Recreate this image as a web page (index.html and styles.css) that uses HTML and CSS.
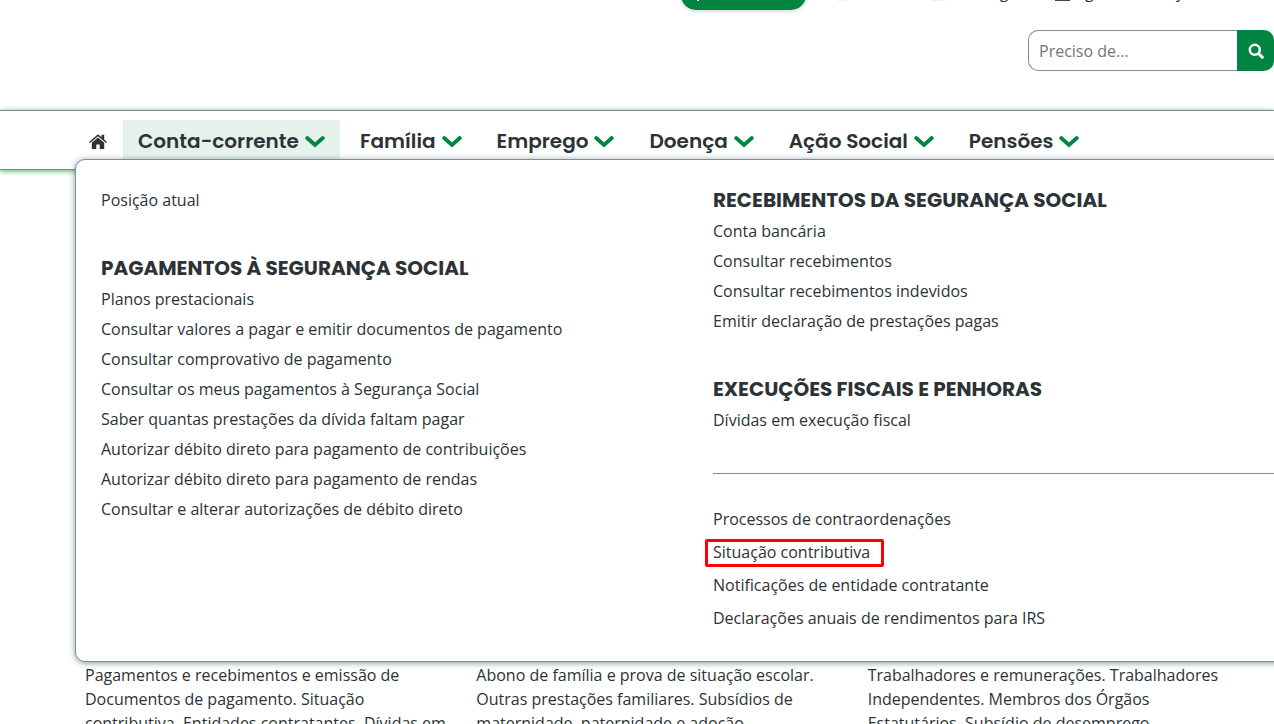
FILE: index.html
```html
<!DOCTYPE html>
<html lang="pt">
<head>
    <meta charset="UTF-8">
    <meta name="viewport" content="width=device-width, initial-scale=1.0">
    <title>Segurança Social Direta</title>
    <link rel="stylesheet" href="styles.css">
</head>
<body>
    <svg class="sprite" aria-hidden="true">
        <symbol id="chevron" viewBox="0 0 20 14">
            <path d="M2.2 4 L10 11 L17.8 4" fill="none" stroke="currentColor" stroke-width="3.8" stroke-linecap="round"/>
        </symbol>
    </svg>

    <header>
        <div class="topbar">
            <button class="btn-entity" type="button" aria-label="Entidade">
                <svg width="2" height="12" viewBox="0 0 2 12"><rect width="2" height="12" fill="currentColor"/></svg>
            </button>
            <a href="#" class="top-link profile"><i class="dot small"></i>Perfil</a>
            <a href="#" class="top-link messages"><i class="dot"></i>Mensagens</a>
            <a href="#" class="top-link agenda"><i class="dot dark"></i>Agenda</a>
            <a href="#" class="top-link help">Ajuda</a>
        </div>
        <form class="search">
            <input type="text" placeholder="Preciso de..." aria-label="Preciso de...">
            <button type="submit" aria-label="Pesquisar">
                <svg width="16" height="16" viewBox="0 0 16 16"><circle cx="6.8" cy="6.8" r="5" fill="none" stroke="currentColor" stroke-width="2.5"/><path d="M10.5 10.5 L14.3 14.3" stroke="currentColor" stroke-width="3" stroke-linecap="round"/></svg>
            </button>
        </form>
    </header>

    <nav class="menu">
        <a href="#" class="home" aria-label="Início">
            <svg width="18" height="15" viewBox="0 0 18 15" fill="currentColor"><path d="M9 0.2 L12.6 3.3 V0.8 H15.2 V5.5 L18 7.9 L17 9 L9 2.3 L1 9 L0 7.9 Z"/><path d="M9 3.6 L15.2 8.8 V15 H10.7 V10.5 H7.3 V15 H2.8 V8.8 Z"/></svg>
        </a>
        <a href="#" class="active">Conta-corrente <svg class="chevron"><use href="#chevron"/></svg></a>
        <a href="#">Família <svg class="chevron"><use href="#chevron"/></svg></a>
        <a href="#">Emprego <svg class="chevron"><use href="#chevron"/></svg></a>
        <a href="#">Doença <svg class="chevron"><use href="#chevron"/></svg></a>
        <a href="#">Ação Social <svg class="chevron"><use href="#chevron"/></svg></a>
        <a href="#">Pensões <svg class="chevron"><use href="#chevron"/></svg></a>

        <!-- submenu Conta-corrente -->
        <div class="submenu">
            <div class="col">
                <ul>
                    <li><a href="#">Posição atual</a></li>
                </ul>
                <h2>Pagamentos à Segurança Social</h2>
                <ul>
                    <li><a href="#">Planos prestacionais</a></li>
                    <li><a href="#">Consultar valores a pagar e emitir documentos de pagamento</a></li>
                    <li><a href="#">Consultar comprovativo de pagamento</a></li>
                    <li><a href="#">Consultar os meus pagamentos à Segurança Social</a></li>
                    <li><a href="#">Saber quantas prestações da dívida faltam pagar</a></li>
                    <li><a href="#">Autorizar débito direto para pagamento de contribuições</a></li>
                    <li><a href="#">Autorizar débito direto para pagamento de rendas</a></li>
                    <li><a href="#">Consultar e alterar autorizações de débito direto</a></li>
                </ul>
            </div>
            <div class="col">
                <h2>Recebimentos da Segurança Social</h2>
                <ul>
                    <li><a href="#">Conta bancária</a></li>
                    <li><a href="#">Consultar recebimentos</a></li>
                    <li><a href="#">Consultar recebimentos indevidos</a></li>
                    <li><a href="#">Emitir declaração de prestações pagas</a></li>
                </ul>
                <h2>Execuções fiscais e penhoras</h2>
                <ul>
                    <li><a href="#">Dívidas em execução fiscal</a></li>
                </ul>
                <hr>
                <ul class="others">
                    <li><a href="#">Processos de contraordenações</a></li>
                    <li><a href="#" class="marked">Situação contributiva</a></li>
                    <li><a href="#">Notificações de entidade contratante</a></li>
                    <li><a href="#">Declarações anuais de rendimentos para IRS</a></li>
                </ul>
            </div>
        </div>
    </nav>

    <main>
        <p>Pagamentos e recebimentos e emissão de Documentos de pagamento. Situação contributiva. Entidades contratantes. Dívidas em</p>
        <p>Abono de família e prova de situação escolar. Outras prestações familiares. Subsídios de maternidade, paternidade e adoção.</p>
        <p>Trabalhadores e remunerações. Trabalhadores Independentes. Membros dos Órgãos Estatutários. Subsídio de desemprego.</p>
    </main>
</body>
</html>
```
FILE: styles.css
```css
* {
    box-sizing: border-box;
}

body {
    margin: 0;
    height: 100vh;
    overflow: hidden;
    background-color: #fff;
    color: #2c3236;
    font-family: "Open Sans", sans-serif;
    font-size: 16px;
    line-height: 24px;
}

a {
    color: inherit;
    text-decoration: none;
}

ul {
    list-style: none;
    margin: 0;
    padding: 0;
}

.sprite {
    display: none;
}

/* header */
header {
    display: flow-root;
    height: 110px;
}

.topbar {
    display: flex;
    justify-content: flex-end;
    height: 30px;
    margin-top: -20px;
}

.btn-entity {
    display: flex;
    align-items: center;
    width: 125px;
    margin-right: 32px;
    padding: 0 16px;
    border: none;
    border-radius: 15px;
    background-color: #008542;
    color: #fff;
    box-shadow: 0 1px 4px rgba(0, 0, 0, 0.2);
}

.top-link {
    display: flex;
    gap: 5px;
}

.profile {
    width: 94px;
}

.messages {
    width: 123px;
}

.agenda {
    width: 112px;
}

.help {
    width: 107px;
}

.dot {
    width: 13px;
    height: 21px;
    border-bottom: 1px solid #eee;
}

.dot.small {
    width: 9px;
}

.dot.dark {
    width: 15px;
    border-color: #444;
}

.search {
    display: flex;
    justify-content: flex-end;
    margin-top: 20px;
}

.search input {
    width: 209px;
    height: 41px;
    padding: 0 10px;
    border: 1px solid #7f8f96;
    border-right: none;
    border-radius: 10px 0 0 10px;
    font: inherit;
}

.search input::placeholder {
    color: #757575;
}

.search button {
    display: flex;
    align-items: center;
    justify-content: center;
    width: 37px;
    height: 41px;
    padding: 0;
    border: none;
    border-radius: 0 10px 10px 0;
    background-color: #008542;
    color: #fff;
}

/* menu */
.menu {
    position: relative;
    display: flex;
    gap: 5px;
    height: 60px;
    padding: 9px 0 0 74px;
    border-top: 1px solid #7f8f96;
    border-bottom: 1px solid #7f8f96;
    box-shadow: 0 1px 5px #4caf50;
}

.menu > a {
    display: flex;
    align-items: center;
    gap: 6px;
    height: 42px;
    padding: 0 15px;
    font-family: Poppins, Inter, sans-serif;
    font-size: 20px;
    font-weight: 600;
    white-space: nowrap;
}

.menu > .home {
    padding: 0 11px 0 15px;
}

.menu > .active {
    background-color: #e5f2ec;
}

.chevron {
    width: 20px;
    height: 14px;
    color: #008542;
}

.submenu {
    position: absolute;
    top: 48px;
    left: 75px;
    right: -77px;
    display: grid;
    grid-template-columns: 1fr 1fr;
    padding: 25px;
    border: 1px solid #7f8f96;
    border-radius: 10px;
    background-color: #fff;
    box-shadow: 0 1px 6px rgba(60, 80, 95, 0.6);
}

.submenu h2 {
    margin: 0 0 1px;
    font-family: Poppins, Inter, sans-serif;
    font-size: 20px;
    font-weight: 700;
    line-height: 30px;
    text-transform: uppercase;
}

.submenu li {
    height: 30px;
    line-height: 30px;
}

.submenu ul + h2 {
    margin-top: 38px;
}

.submenu hr {
    margin: 38px 0 30px;
    border: none;
    border-top: 1px solid #7f8f96;
}

.submenu .others li {
    height: 33px;
}

.marked {
    position: relative;
}

.marked::after {
    content: "";
    position: absolute;
    inset: -2px -14px -4px -8px;
    border: 3px solid #f00;
    border-radius: 2px;
}

/* cards */
main {
    display: grid;
    grid-template-columns: repeat(3, 1fr);
    column-gap: 25px;
    padding: 493px 40px 0 85px;
}

main p {
    margin: 0;
}
```
